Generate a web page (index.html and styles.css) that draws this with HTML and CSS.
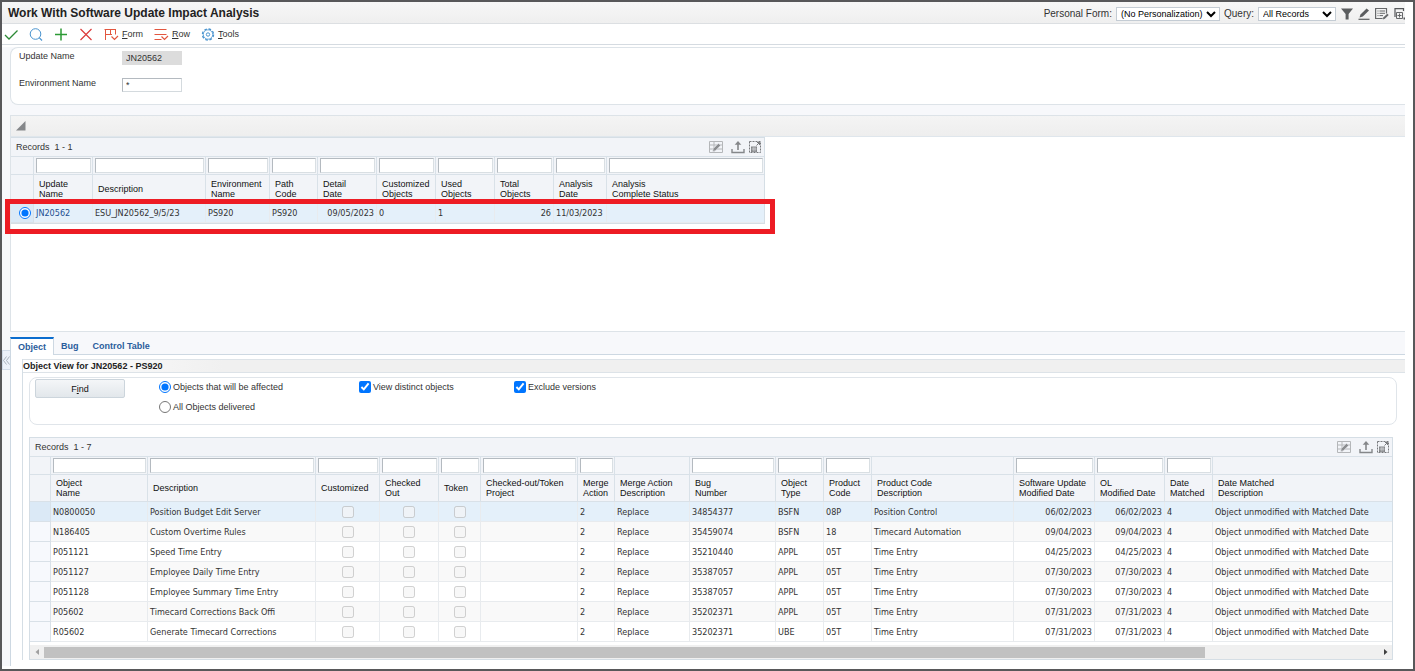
FILE: index.html
```html
<!DOCTYPE html>
<html lang="en">
<head>
  <meta charset="UTF-8" />
  <meta name="viewport" content="width=device-width, initial-scale=1.0"/>
  <title>Work With Software Update Impact Analysis</title>
  <link rel="stylesheet" href="styles.css">
</head>
<body>
  <!-- Shared icons -->
  <svg class="icon-defs" aria-hidden="true">
    <symbol id="icon-grid-edit" viewBox="0 0 14 14">
      <path d="M.5 1.5h13v11H.5zM.5 5h13M.5 9h13M5 1.5v11" fill="none" stroke="#b4b6b9"/>
      <path d="M3.5 11.5l.8-3 5.2-5.2 2.2 2.2-5.2 5.2z" fill="#8b8d90" stroke="#f2f4f8" stroke-width=".6"/>
    </symbol>
    <symbol id="icon-export" viewBox="0 0 14 14">
      <path d="M1 9v3.5h12V9" fill="none" stroke="#85878a" stroke-width="1.4"/>
      <path d="M7 10V3" fill="none" stroke="#85878a" stroke-width="1.6"/>
      <path d="M3.7 4.8L7 1l3.3 3.8z" fill="#85878a"/>
    </symbol>
    <symbol id="icon-maximize" viewBox="0 0 14 14">
      <path d="M1.5 1.5h11v11h-11z" fill="none" stroke="#77797c" stroke-dasharray="2 1"/>
      <path d="M3 6.5h6V12H3z" fill="#85878a"/>
      <path d="M3.6 9h5M5.2 7v4.5M7 7v4.5" stroke="#e6e8eb" stroke-width=".6"/>
      <path d="M8.5 5.5l3-3M9 2.5h2.5V5" fill="none" stroke="#77797c"/>
    </symbol>
  </svg>

  <div class="app">
    <header class="title-bar">
      <h1>Work With Software Update Impact Analysis</h1>
      <div class="title-tools">
        <label for="personalForm">Personal Form:</label>
        <select id="personalForm" class="select-form">
          <option>(No Personalization)</option>
        </select>
        <label for="query">Query:</label>
        <select id="query" class="select-query">
          <option>All Records</option>
        </select>
        <button class="icon-btn" aria-label="Filter">
          <svg width="12" height="12" viewBox="0 0 12 12"><path d="M0 .5h12L7.6 6v5.5H4.6V6z" fill="#5c5e60"/></svg>
        </button>
        <button class="icon-btn" aria-label="Edit">
          <svg width="12" height="12" viewBox="0 0 12 12"><path d="M1.5 9.500l1-3L8.600.5l2.400 2-6.200 6z" fill="#5c5e60"/><path d="M.5 11.300h11" stroke="#5c5e60" stroke-width="1.200"/></svg>
        </button>
        <button class="icon-btn" aria-label="Notes">
          <svg width="14" height="12" viewBox="0 0 14 12"><path d="M11.500 5.500v-5H.6v10h7" fill="none" stroke="#66686a" stroke-width="1.200"/><path d="M2.500 3h1M4.500 3h5.500M2.500 5.300h1M4.500 5.300h5.500M2.500 7.600h1M4.500 7.600h3.500" stroke="#66686a"/><path d="M7.800 11.500l.7-2.200 3.800-3.500 1.400 1.300-3.800 3.600z" fill="#66686a"/></svg>
        </button>
        <button class="icon-btn" aria-label="Personalize">
          <svg width="11" height="12" viewBox="0 0 11 12"><path d="M9.500 3V.6H1V9" fill="none" stroke="#55575a" stroke-width="1.200"/><path d="M2.500 4.500h6v6h-6zM5.500 5.500v4M3.500 7.500h4" fill="none" stroke="#66686a"/><path d="M9.500 9.500h1.500v2H9.500z" fill="#55575a"/></svg>
        </button>
      </div>
    </header>

    <nav class="toolbar">
      <button class="tool" aria-label="Select">
        <svg width="14" height="14" viewBox="0 0 14 14"><path d="M1 8l4 4 8.500-8.500" fill="none" stroke="#2c8a35" stroke-width="1.300"/></svg>
      </button>
      <button class="tool" aria-label="Find">
        <svg width="14" height="14" viewBox="0 0 14 14"><circle cx="6.500" cy="7" r="5.300" fill="none" stroke="#4a94cf"/><path d="M10.200 10.700l2.800 2.800" stroke="#4a94cf" stroke-width="1.200"/></svg>
      </button>
      <button class="tool" aria-label="Add">
        <svg width="14" height="14" viewBox="0 0 14 14"><path d="M7 1.500v12M1 7.500h12" stroke="#2c9a35" stroke-width="1.500"/></svg>
      </button>
      <button class="tool" aria-label="Close">
        <svg width="14" height="14" viewBox="0 0 14 14"><path d="M1.500 2l11 11M12.500 2l-11 11" stroke="#dc3b3b" stroke-width="1.200"/></svg>
      </button>
      <button class="tool tool-menu">
        <svg width="15" height="14" viewBox="0 0 15 14"><path d="M1.500 13V2.500M.5 2.500H12M1.500 7.500H8M6.500 2.500v5M11.500 2.500v5" fill="none" stroke="#e2563f"/><path d="M7.500 9.500l3 3 3.500-3.500" fill="none" stroke="#e2563f" stroke-width="1.200"/></svg>
        <span><u>F</u>orm</span>
      </button>
      <button class="tool tool-menu">
        <svg width="15" height="14" viewBox="0 0 15 14"><path d="M.5 2.500h12M.5 7.500h12M.5 12.500h7" fill="none" stroke="#e2563f"/><path d="M7.500 9.500l3 3 3.500-3.500" fill="none" stroke="#e2563f" stroke-width="1.200"/></svg>
        <span><u>R</u>ow</span>
      </button>
      <button class="tool tool-menu">
        <svg width="14" height="14" viewBox="0 0 14 14"><circle cx="7" cy="7.500" r="5.500" fill="none" stroke="#4a94cf" stroke-width="1.400" stroke-dasharray="2.600 1.700"/><circle cx="7" cy="7.500" r="4.700" fill="#fff" stroke="#4a94cf" stroke-width=".8"/><circle cx="7" cy="7.500" r="1.700" fill="none" stroke="#4a94cf"/></svg>
        <span><u>T</u>ools</span>
      </button>
    </nav>

    <main class="workspace">
      <section class="fields">
        <div class="field">
          <label for="updateName">Update Name</label>
          <input type="text" id="updateName" value="JN20562" readonly>
        </div>
        <div class="field">
          <label for="environmentName">Environment Name</label>
          <input type="text" id="environmentName" value="*">
        </div>
      </section>

      <section class="update-panel">
        <div class="panel-bar">
          <svg width="10" height="10" viewBox="0 0 10 10"><path d="M9.500 0v9.500H0z" fill="#85878a"/></svg>
        </div>
        <div class="grid grid-updates">
          <div class="grid-bar">
            <span>Records&nbsp; 1 - 1</span>
            <div class="grid-tools">
              <button class="icon-btn" aria-label="Customize grid"><svg width="14" height="14"><use href="#icon-grid-edit"/></svg></button>
              <button class="icon-btn" aria-label="Export"><svg width="14" height="14"><use href="#icon-export"/></svg></button>
              <button class="icon-btn" aria-label="Maximize"><svg width="14" height="14"><use href="#icon-maximize"/></svg></button>
            </div>
          </div>
          <table id="updatesTable"></table>
          <div class="highlight"></div>
        </div>
      </section>

      <div class="tabs">
        <button class="tab active">Object</button>
        <button class="tab">Bug</button>
        <button class="tab">Control Table</button>
      </div>

      <div class="tab-body">
        <button class="collapse" aria-label="Collapse">
          <svg width="7" height="9" viewBox="0 0 7 9"><path d="M3.500.5l-3 4 3 4M6.500.5l-3 4 3 4" fill="none" stroke="#9aa3ad" stroke-width=".8"/></svg>
        </button>
        <section class="object-view">
          <h2>Object View for JN20562 - PS920</h2>

          <div class="search-box">
            <button class="find-btn">F<u>i</u>nd</button>
            <div class="options">
              <label><input type="radio" name="scope" checked>Objects that will be affected</label>
              <label><input type="checkbox" checked>View distinct objects</label>
              <label><input type="checkbox" checked>Exclude versions</label>
              <label><input type="radio" name="scope">All Objects delivered</label>
            </div>
          </div>

          <div class="grid grid-objects">
            <div class="grid-bar">
              <span>Records&nbsp; 1 - 7</span>
              <div class="grid-tools">
                <button class="icon-btn" aria-label="Customize grid"><svg width="14" height="14"><use href="#icon-grid-edit"/></svg></button>
                <button class="icon-btn" aria-label="Export"><svg width="14" height="14"><use href="#icon-export"/></svg></button>
                <button class="icon-btn" aria-label="Maximize"><svg width="14" height="14"><use href="#icon-maximize"/></svg></button>
              </div>
            </div>
            <table id="objectsTable"></table>
            <div class="scrollbar">
              <svg class="arrow" width="14" height="12" viewBox="0 0 14 12"><path d="M9 3v6L5.500 6z" fill="#a0a0a0"/></svg>
              <div class="track"><div class="thumb"></div></div>
              <svg class="arrow" width="14" height="12" viewBox="0 0 14 12"><path d="M6 3v6l3.500-3z" fill="#404040"/></svg>
            </div>
          </div>
        </section>
      </div>
    </main>
  </div>

  <script src="script.js"></script>
</body>
</html>
```

FILE: styles.css
```css
* {
  box-sizing: border-box;
}

body {
  margin: 0;
  font-family: "Liberation Sans", Arial, sans-serif;
  font-size: 9px;
  line-height: 10px;
  color: #333;
  background: #fff;
}

button, input, select {
  font: inherit;
  color: inherit;
}

button {
  padding: 0;
  border: none;
  background: none;
  cursor: pointer;
}

svg {
  display: block;
}

.icon-defs {
  position: absolute;
  width: 0;
  height: 0;
}

.app {
  display: flex;
  flex-direction: column;
  min-height: 100vh;
  border: 2px solid #58585a;
  padding-right: 8px;
  padding-bottom: 3px;
}

/* Title bar */
.title-bar {
  display: flex;
  justify-content: space-between;
  align-items: center;
  height: 22px;
  padding-left: 6px;
  background: linear-gradient(#f7f7f7, #efefef);
  border-bottom: 1px solid #dcdfe2;
}

h1 {
  margin: 0;
  font-size: 12px;
  line-height: 14px;
  color: #222;
}

.title-tools {
  display: flex;
  align-items: center;
  gap: 4px;
  padding-top: 2px;
  font-size: 10px;
}

.title-tools select {
  height: 14px;
  padding: 0;
  border: 1px solid #c4ccd4;
  background: #fff;
  color: #000;
  font-size: 9px;
}

.select-form {
  width: 104px;
}

.select-query {
  width: 78px;
}

.title-tools .icon-btn {
  margin-left: 1px;
}

/* Toolbar */
.toolbar {
  display: flex;
  align-items: center;
  gap: 11px;
  height: 21px;
  padding-left: 2px;
  border-bottom: 1px solid #d5dbe1;
}

.tool-menu {
  display: flex;
  align-items: center;
  gap: 3px;
}

/* Workspace */
.workspace {
  display: flex;
  flex-direction: column;
  flex: 1;
  margin-top: 2px;
  padding-left: 8px;
  background: #f7f8fb;
}

.fields {
  display: flex;
  flex-direction: column;
  gap: 13px;
  padding: 3px 8px 12px;
  border: 1px solid #dde3e8;
  border-right: none;
  border-radius: 8px 0 0 8px;
  background: #fff;
}

.field {
  display: flex;
  align-items: flex-start;
}

.field label {
  width: 103px;
}

.field input {
  width: 60px;
  height: 14px;
  padding: 0 3px;
  border: 1px solid #d4dade;
  border-top-color: #b4bac0;
  border-left-color: #b4bac0;
  background: #fff;
}

.field input[readonly] {
  border-color: #dcdcdc;
  background: #dcdcdc;
}

.update-panel {
  min-height: 217px;
  margin-top: 10px;
  border: 1px solid #dde3e8;
  border-right: none;
  background: #fff;
}

.panel-bar {
  display: flex;
  align-items: center;
  height: 21px;
  padding-left: 5px;
  background: linear-gradient(#f4f4f4, #eee);
  border-bottom: 1px solid #dfe6ec;
}

/* Grids */
.grid {
  position: relative;
  border: 1px solid #d5dee5;
}

.grid-updates {
  width: 754px;
  border-left: none;
}

.grid-bar {
  display: flex;
  justify-content: space-between;
  align-items: center;
  height: 18px;
  padding: 0 2px 0 5px;
  background: #f2f4f8;
}

.grid-tools {
  display: flex;
  gap: 3px;
}

.grid-tools .icon-btn:first-child {
  margin-right: 5px;
}

table {
  width: 100%;
  table-layout: fixed;
  border-collapse: separate;
  border-spacing: 0;
}

td, th {
  padding: 0 2px;
  border-right: 1px solid #e8ebee;
  border-bottom: 1px solid #e8ebee;
  text-align: left;
  white-space: nowrap;
  overflow: hidden;
}

td:last-child, th:last-child {
  border-right: none;
}

.filter-row td {
  height: 19px;
  padding: 0 1px 0 2px;
  border-top: 1px solid #d9e1e8;
  border-color: #d9e1e8;
  background: #f2f4f8;
}

.filter-row input {
  display: block;
  width: 100%;
  height: 15px;
  padding: 0 2px;
  border: 1px solid #d9dfe3;
  border-top-color: #b4bac0;
  border-left-color: #b4bac0;
  background: #fff;
}

th {
  height: 27px;
  padding: 0 0 0 5px;
  border-color: #d9e1e8;
  background: #f2f4f8;
  color: #111;
  font-weight: normal;
  white-space: pre-line;
}

.grid-updates th {
  height: 28px;
}

.data-row td {
  height: 20px;
  font-family: "DejaVu Sans Condensed", "DejaVu Sans", sans-serif;
}

.data-row:nth-child(even) td {
  background: #f9f9f9;
}

.data-row td:first-child {
  border-color: #d9e1e8;
  background: #f7f9fd;
}

.data-row.selected td {
  background: #e4f0fa;
}

.data-row.selected td:first-child {
  background: #dbe9f6;
}

.data-row .right {
  text-align: right;
}

.data-row .link {
  color: #1d4f91;
}

.data-row .center {
  text-align: center;
}

input[type="radio"], input[type="checkbox"] {
  width: 12px;
  height: 12px;
  margin: 0;
  vertical-align: middle;
}

.highlight {
  position: absolute;
  top: 61px;
  left: -6px;
  right: -11px;
  height: 35px;
  border: 5px solid #ed1c24;
}

/* Tabs */
.tabs {
  display: flex;
  height: 18px;
  margin-top: 5px;
  border-bottom: 1px solid #cdd8e2;
}

.tab {
  height: 17px;
  padding: 0 7px;
  font-weight: bold;
  color: #2a5d9c;
}

.tab.active {
  height: 18px;
  border-top: 2px solid #0a6cce;
  border-right: 1px solid #cdd8e2;
  border-left: 1px solid #cdd8e2;
  background: #fff;
}

.tab-body {
  position: relative;
  flex: 1;
  padding: 4px 0 0 11px;
  border-left: 1px solid #cdd8e2;
  background: #fff;
}

.collapse {
  position: absolute;
  top: -5px;
  left: -9px;
  width: 8px;
  height: 20px;
  border: 1px solid #d3dde8;
  border-right: none;
  background: #edf2f9;
}

.object-view {
  height: 100%;
  border-left: 1px solid #d5dee5;
}

h2 {
  margin: 0;
  font-size: 9px;
  line-height: 12px;
  color: #222;
  border-top: 1px solid #dde3e8;
  border-bottom: 1px solid #dde3e8;
  background: linear-gradient(90deg, #fff, #f0f0f0 200px);
}

.search-box {
  display: flex;
  align-items: flex-start;
  gap: 34px;
  min-height: 48px;
  margin: 4px 8px 0 6px;
  padding: 1px 5px;
  border: 1px solid #e0e5ea;
  border-radius: 8px;
}

.find-btn {
  width: 90px;
  height: 19px;
  border: 1px solid #ccd5dc;
  border-radius: 2px;
  background: linear-gradient(#f4f6f8, #e2e7eb);
  color: #111;
}

.options {
  display: grid;
  grid-template-columns: 200px 155px 1fr;
  row-gap: 8px;
  padding-top: 2px;
}

.options label {
  display: flex;
  align-items: center;
  gap: 2px;
}

.grid-objects {
  margin: 12px 12px 0 6px;
}

/* Horizontal scroll bar under the grid */
.scrollbar {
  display: flex;
  align-items: center;
  height: 14px;
  margin-top: 3px;
  background: #f0f0f0;
}

.track {
  flex: 1;
}

.thumb {
  width: 87%;
  height: 11px;
  background: #c1c1c1;
}
```

FILE: script.js
```js
// width in px, header text, filter box yes/no, cell class
const updateColumns = [
  { width: 23, title: '', filter: false, cls: 'right' },
  { width: 59, title: 'Update\nName', filter: true, cls: 'link' },
  { width: 113, title: 'Description', filter: true },
  { width: 64, title: 'Environment\nName', filter: true },
  { width: 48, title: 'Path\nCode', filter: true },
  { width: 59, title: 'Detail\nDate', filter: true, cls: 'right' },
  { width: 59, title: 'Customized\nObjects', filter: true },
  { width: 59, title: 'Used\nObjects', filter: true },
  { width: 59, title: 'Total\nObjects', filter: true, cls: 'right' },
  { width: 53, title: 'Analysis\nDate', filter: true },
  { title: 'Analysis\nComplete Status', filter: true }
];

const updates = [
  ['<input type="radio" name="update" aria-label="Select row" checked>', 'JN20562', 'ESU_JN20562_9/5/23', 'PS920', 'PS920', '09/05/2023', '0', '1', '26', '11/03/2023', '']
];

const objectColumns = [
  { width: 21, title: '', filter: false },
  { width: 97, title: 'Object\nName', filter: true },
  { width: 168, title: 'Description', filter: true },
  { width: 64, title: 'Customized', filter: true, cls: 'center' },
  { width: 59, title: 'Checked\nOut', filter: true, cls: 'center' },
  { width: 42, title: 'Token', filter: true, cls: 'center' },
  { width: 97, title: 'Checked-out/Token\nProject', filter: true },
  { width: 37, title: 'Merge\nAction', filter: true },
  { width: 75, title: 'Merge Action\nDescription', filter: false },
  { width: 86, title: 'Bug\nNumber', filter: true },
  { width: 48, title: 'Object\nType', filter: true },
  { width: 48, title: 'Product\nCode', filter: true },
  { width: 142, title: 'Product Code\nDescription', filter: false },
  { width: 81, title: 'Software Update\nModified Date', filter: true, cls: 'right' },
  { width: 70, title: 'OL\nModified Date', filter: true, cls: 'right' },
  { width: 48, title: 'Date\nMatched', filter: true },
  { title: 'Date Matched\nDescription', filter: false }
];

// name, description, bug, type, product code, product description, date
const objects = [
  ['N0800050', 'Position Budget Edit Server', '34854377', 'BSFN', '08P', 'Position Control', '06/02/2023'],
  ['N186405', 'Custom Overtime Rules', '35459074', 'BSFN', '18', 'Timecard Automation', '09/04/2023'],
  ['P051121', 'Speed Time Entry', '35210440', 'APPL', '05T', 'Time Entry', '04/25/2023'],
  ['P051127', 'Employee Daily Time Entry', '35387057', 'APPL', '05T', 'Time Entry', '07/30/2023'],
  ['P051128', 'Employee Summary Time Entry', '35387057', 'APPL', '05T', 'Time Entry', '07/30/2023'],
  ['P05602', 'Timecard Corrections Back Offi', '35202371', 'APPL', '05T', 'Time Entry', '07/31/2023'],
  ['R05602', 'Generate Timecard Corrections', '35202371', 'UBE', '05T', 'Time Entry', '07/31/2023']
];

function checkbox(label) {
  return `<input type="checkbox" aria-label="${label}" disabled>`;
}

function renderGrid(id, columns, rows) {
  const cols = columns.map(c => c.width ? `<col width="${c.width}">` : '<col>').join('');
  const filters = columns.map(c => {
    const label = c.title.replace('\n', ' ');
    return `<td>${c.filter ? `<input type="text" aria-label="Filter ${label}">` : ''}</td>`;
  }).join('');
  const heads = columns.map(c => `<th>${c.title}</th>`).join('');
  const body = rows.map((row, i) => {
    const cells = row.map((value, j) => `<td class="${columns[j].cls || ''}">${value}</td>`).join('');
    return `<tr class="data-row${i === 0 ? ' selected' : ''}">${cells}</tr>`;
  }).join('');

  document.getElementById(id).innerHTML =
    `<colgroup>${cols}</colgroup>
    <thead><tr class="filter-row">${filters}</tr><tr>${heads}</tr></thead>
    <tbody>${body}</tbody>`;
}

renderGrid('updatesTable', updateColumns, updates);
renderGrid('objectsTable', objectColumns, objects.map(o => [
  '', o[0], o[1], checkbox('Customized'), checkbox('Checked Out'), checkbox('Token'), '',
  '2', 'Replace', o[2], o[3], o[4], o[5], o[6], o[6], '4', 'Object unmodified with Matched Date'
]));
```
